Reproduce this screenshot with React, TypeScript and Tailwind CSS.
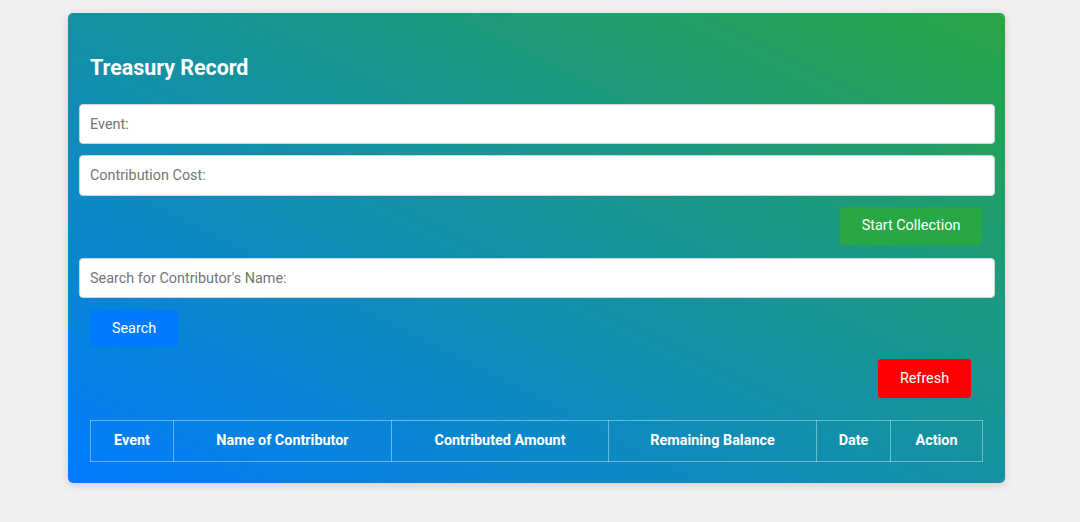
import React, {useState} from 'react';

const columns = [
  {label: 'Event', w: 'w-[83px]'},
  {label: 'Name of Contributor', w: 'w-[218px]'},
  {label: 'Contributed Amount', w: 'w-[217px]'},
  {label: 'Remaining Balance', w: 'w-[208px]'},
  {label: 'Date', w: 'w-[74px]'},
  {label: 'Action', w: 'w-[92px]'},
];

const inputClass =
  'block w-full h-[40px] px-[10px] rounded-[4px] bg-white border border-[#ced4da] text-[14.4px] text-[#495057] placeholder:text-[#757575] outline-none';

export default function App() {
  const [event, setEvent] = useState( '' );
  const [cost, setCost] = useState( '' );
  const [search, setSearch] = useState( '' );

  return (
    <div className="min-h-[522px] bg-[#f0f0f0] pt-[13px] font-['Roboto',sans-serif]">
      <div className="ml-[68px] w-[937px] rounded-[5px] bg-[linear-gradient(to_top_right,#007bff,#28a745)] pl-[11px] pr-[10px] pb-[21px] shadow-[0_2px_8px_rgba(0,0,0,0.15)]">
        <h2 className="pt-[42px] mb-[23px] ml-[11px] text-[21.4px] leading-[26px] font-bold text-white">Treasury Record</h2>

        <input className={inputClass} placeholder="Event:" value={event} onChange={e => setEvent( e.target.value )} />
        <input className={`${inputClass} mt-[11px] h-[41px]`} placeholder="Contribution Cost:" value={cost} onChange={e => setCost( e.target.value )} />

        <div className="flex justify-end mt-[11px] pr-[13px]">
          <button className="h-[38px] w-[142px] rounded-[3px] bg-[#28a745] text-[14.4px] text-white">Start Collection</button>
        </div>

        <input
          className={`${inputClass} mt-[13px] border-[#80bdff]`}
          placeholder="Search for Contributor's Name:"
          value={search}
          onChange={e => setSearch( e.target.value )}
        />

        <div className="mt-[12px] ml-[11px]">
          <button className="h-[37px] w-[88px] rounded-[3px] bg-[#007bff] text-[14.4px] text-white">Search</button>
        </div>

        <div className="flex justify-end mt-[12px] pr-[24px]">
          <button className="h-[39px] w-[93px] rounded-[3px] bg-[#ff0000] text-[14.4px] text-white">Refresh</button>
        </div>

        <div className="mt-[22px] ml-[11px]">
          <table className="w-[892px] table-fixed border-collapse">
            <thead>
              <tr>
                {columns.map( col => (
                  <th
                    key={col.label}
                    className={`${col.w} h-[41px] border border-white/40 text-center text-[14.4px] font-bold text-white`}
                  >
                    {col.label}
                  </th>
                ) )}
              </tr>
            </thead>
            <tbody></tbody>
          </table>
        </div>
      </div>
    </div>
  );
}
